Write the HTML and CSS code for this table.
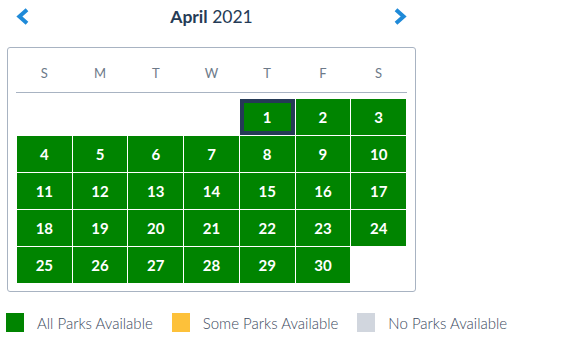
FILE: index.html
```html
<!DOCTYPE html>
<html lang="en">
<head>
<meta charset="utf-8">
<title>Park availability – April 2021</title>
<link rel="stylesheet" href="styles.css">
</head>
<body>
<div class="calendar">
  <div class="month-bar">
    <button class="nav" aria-label="Previous month">
      <svg width="13" height="17" viewBox="0 0 13 17"><path d="M11 1.8 L3.4 8.5 L11 15.2" fill="none" stroke="#1f8ad8" stroke-width="4" stroke-linejoin="miter"/></svg>
    </button>
    <div class="month-title"><strong>April</strong> 2021</div>
    <button class="nav" aria-label="Next month">
      <svg width="13" height="17" viewBox="0 0 13 17"><path d="M2 1.8 L9.6 8.5 L2 15.2" fill="none" stroke="#1f8ad8" stroke-width="4" stroke-linejoin="miter"/></svg>
    </button>
  </div>

  <div class="card">
    <div class="weekdays">
      <span>S</span><span>M</span><span>T</span><span>W</span><span>T</span><span>F</span><span>S</span>
    </div>
    <div class="days">
      <span class="empty"></span><span class="empty"></span><span class="empty"></span><span class="empty"></span>
      <span class="day selected">1</span><span class="day">2</span><span class="day">3</span>
      <span class="day">4</span><span class="day">5</span><span class="day">6</span><span class="day">7</span><span class="day">8</span><span class="day">9</span><span class="day">10</span>
      <span class="day">11</span><span class="day">12</span><span class="day">13</span><span class="day">14</span><span class="day">15</span><span class="day">16</span><span class="day">17</span>
      <span class="day">18</span><span class="day">19</span><span class="day">20</span><span class="day">21</span><span class="day">22</span><span class="day">23</span><span class="day">24</span>
      <span class="day">25</span><span class="day">26</span><span class="day">27</span><span class="day">28</span><span class="day">29</span><span class="day">30</span>
    </div>
  </div>

  <ul class="legend">
    <li><i class="swatch all"></i>All Parks Available</li>
    <li><i class="swatch some"></i>Some Parks Available</li>
    <li><i class="swatch none"></i>No Parks Available</li>
  </ul>
</div>
</body>
</html>
```

FILE: styles.css
```css
* { box-sizing: border-box; }

html, body {
  margin: 0;
  background: #fff;
}

body {
  font-family: Lato, "Open Sans", sans-serif;
  color: #253b56;
}

.calendar {
  padding: 0 0 0 7px;
}

.month-bar {
  width: 409px;
  height: 35px;
  display: flex;
  align-items: center;
  justify-content: space-between;
  padding: 0 9px 2px 9px;
}

.nav {
  border: 0;
  background: none;
  padding: 0;
  width: 13px;
  height: 17px;
  display: flex;
}

.month-title {
  font-size: 17.5px;
  color: #253b56;
}

.month-title strong {
  font-weight: 700;
}

.card {
  margin-top: 12px;
  width: 409px;
  border: 1px solid #a8b3c2;
  border-radius: 3px;
  padding: 0 9px 8px 9px;
}

.weekdays {
  display: grid;
  grid-template-columns: repeat(7, 1fr);
  column-gap: 1px;
  height: 45px;
  border-bottom: 1px solid #a8b3c2;
  margin: 0 -1px 0 -1px;
  padding: 0 1px 0 1px;
}

.weekdays span {
  display: flex;
  align-items: center;
  justify-content: center;
  font-size: 13px;
  color: #6d7a89;
  padding-top: 5px;
}

.days {
  margin-top: 6px;
  width: 389px;
  display: grid;
  grid-template-columns: repeat(7, 1fr);
  grid-auto-rows: 36px;
  gap: 1px;
}

.day {
  background: #008400;
  color: #fff;
  font-weight: 700;
  font-size: 15px;
  display: flex;
  align-items: center;
  justify-content: center;
}

.day.selected {
  border: 4px solid #253a56;
}

.legend {
  list-style: none;
  margin: 21px 0 0 -1px;
  padding: 0;
  display: flex;
  gap: 19px;
  font-size: 15px;
  font-weight: 300;
  color: #3b4a5e;
}

.legend li {
  display: flex;
  align-items: center;
  gap: 13px;
}

.swatch {
  width: 18px;
  height: 19px;
  display: block;
}

.swatch.all { background: #008400; }
.swatch.some { background: #fdc13a; }
.swatch.none { background: #d1d6de; }
```
